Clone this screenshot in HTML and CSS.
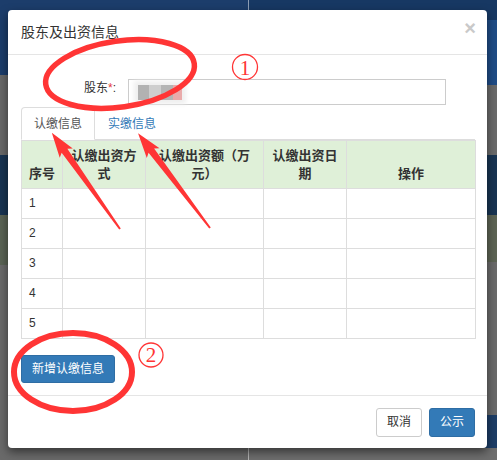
FILE: index.html
```html
<!DOCTYPE html>
<html lang="zh-CN">
<head>
<meta charset="utf-8">
<title>股东及出资信息</title>
<link rel="stylesheet" href="styles.css">
</head>
<body>
<div class="modal">
  <div class="modal-header">
    <h4 class="modal-title">股东及出资信息</h4>
    <span class="close">×</span>
  </div>
  <div class="modal-body">
    <div class="form-row">
      <label class="form-label">股东<span class="req">*</span>:</label>
      <div class="input"><span class="mosaic"><i class="m1"></i><i class="m2"></i><i class="m3"></i><i class="m4"></i></span></div>
    </div>
    <ul class="tabs">
      <li class="tab active">认缴信息</li>
      <li class="tab">实缴信息</li>
    </ul>
    <table class="grid">
      <colgroup>
        <col class="c1"><col class="c2"><col class="c3"><col class="c4"><col class="c5">
      </colgroup>
      <thead>
        <tr><th>序号</th><th>认缴出资方式</th><th>认缴出资额（万元）</th><th>认缴出资日期</th><th>操作</th></tr>
      </thead>
      <tbody>
        <tr><td>1</td><td></td><td></td><td></td><td></td></tr>
        <tr><td>2</td><td></td><td></td><td></td><td></td></tr>
        <tr><td>3</td><td></td><td></td><td></td><td></td></tr>
        <tr><td>4</td><td></td><td></td><td></td><td></td></tr>
        <tr><td>5</td><td></td><td></td><td></td><td></td></tr>
      </tbody>
    </table>
    <button class="btn btn-primary add">新增认缴信息</button>
  </div>
  <div class="modal-footer">
    <button class="btn btn-default">取消</button>
    <button class="btn btn-primary">公示</button>
  </div>
</div>
<svg class="annot" width="497" height="460" viewBox="0 0 497 460">
  <g fill="none" stroke="#ff3535">
    <ellipse cx="120" cy="74" rx="75" ry="33" stroke-width="5.5" transform="rotate(-8 120 74)"/>
    <ellipse cx="73" cy="372" rx="59" ry="39" stroke-width="6"/>
    <circle cx="245" cy="67" r="12.5" stroke-width="1.3"/>
    <circle cx="151" cy="355" r="12" stroke-width="1.3"/>
  </g>
  <g fill="#ff3535" font-family="Liberation Serif, serif" font-size="21" text-anchor="middle">
    <text x="245" y="74.5">1</text>
    <text x="151" y="362">2</text>
  </g>
  <g fill="#ff3535">
    <polygon points="0,-1 96,-3.5 93,-8 118,0 93,8 96,3.5 0,1" transform="translate(120,229) rotate(-125.3)"/>
    <polygon points="0,-1 97,-3.5 94,-8 119,0 94,8 97,3.5 0,1" transform="translate(210,228) rotate(-127.2)"/>
  </g>
</svg>
</body>
</html>
```
FILE: styles.css
```css
html, body {
  margin: 0;
  padding: 0;
}
body {
  width: 497px;
  height: 460px;
  overflow: hidden;
  position: relative;
  font-family: "Liberation Sans", "Noto Sans CJK SC", sans-serif;
  font-size: 12px;
  color: #333;
  background:
    linear-gradient(to bottom, #1c3d6b 0 75px, #686868 75px 155px, #183452 155px 215px, #5a6354 215px 265px, #6a6a6a 265px) left top / 50% 100% no-repeat,
    linear-gradient(to bottom, #173863 0 20px, #1f4c86 20px 85px, #6a6a6a 85px 155px, #183452 155px 215px, #5d6454 215px 262px, #6a6a6a 262px 415px, #1d3d66 415px 448px, #6e6e6e 448px) right top / 50% 100% no-repeat;
}
.modal {
  width: 479px;
  height: 438px;
  margin: 10px 0 0 8px;
  background: #fff;
  border-radius: 4px;
  box-shadow: 0 4px 10px rgba(0, 0, 0, 0.5);
  display: flex;
  flex-direction: column;
}
.modal-header {
  height: 45px;
  box-sizing: border-box;
  border-bottom: 1px solid #e5e5e5;
  padding: 0 13px;
  display: flex;
  align-items: center;
  justify-content: space-between;
}
.modal-title {
  margin: 0;
  font-size: 14px;
  font-weight: normal;
  line-height: 20px;
  color: #333;
}
.close {
  align-self: flex-start;
  margin-top: 8px;
  margin-right: -2px;
  font-size: 20px;
  line-height: 20px;
  font-weight: bold;
  color: #c9c9c9;
}
.modal-body {
  flex: 1;
  padding: 24px 12px 0 13px;
}
.form-row {
  display: flex;
  height: 26px;
}
.form-label {
  width: 95px;
  margin-right: 12px;
  margin-top: 1px;
  text-align: right;
  line-height: 17px;
  color: #333;
}
.req {
  color: #e4393c;
}
.input {
  width: 318px;
  height: 26px;
  box-sizing: border-box;
  border: 1px solid #ccc;
  padding: 5px 0 0 9px;
}
.mosaic {
  display: flex;
  height: 15px;
  width: 44px;
  box-shadow: 0 0 5px 4px #efefef;
  filter: blur(0.6px);
}
.mosaic i {
  display: block;
  height: 15px;
}
.m1 { width: 11px; background: #b2b2b2; }
.m2 { width: 12px; background: #cecece; }
.m3 { width: 12px; background: #b4b4b4; }
.m4 { width: 9px; background: #e9aaaa; }
.tabs {
  list-style: none;
  margin: 2px 0 0;
  padding: 0;
  display: flex;
  border-bottom: 1px solid #ddd;
  height: 32px;
}
.tab {
  padding: 8px 12px 6px;
  line-height: 17px;
  border: 1px solid transparent;
  border-radius: 4px 4px 0 0;
  color: #337ab7;
  height: 17px;
}
.tab.active {
  color: #555;
  border-color: #ddd #ddd #fff;
  background: #fff;
}
.grid {
  width: 454px;
  border-collapse: collapse;
  table-layout: fixed;
  border: 1px solid #ddd;
}
.c1 { width: 41px; }
.c2 { width: 83px; }
.c3 { width: 118px; }
.c4 { width: 83px; }
.c5 { width: 129px; }
.grid th {
  background: #dff0d8;
  font-size: 13px;
  font-weight: bold;
  line-height: 18px;
  padding: 6px 6px 5px;
  vertical-align: bottom;
  text-align: center;
  border: 1px solid #ddd;
  color: #333;
}
.grid td {
  padding: 6px 7px;
  line-height: 17px;
  height: 17px;
  border: 1px solid #ddd;
  color: #333;
}
.btn {
  font-family: inherit;
  font-size: 12px;
  line-height: 17px;
  padding: 5px 10px;
  border: 1px solid transparent;
  border-radius: 3px;
  margin: 0;
}
.btn-default {
  background: #fff;
  border-color: #ccc;
  color: #333;
}
.btn-primary {
  background: #337ab7;
  border-color: #2e6da4;
  color: #fff;
}
.add {
  display: block;
  margin-top: 16px;
  line-height: 16px;
}
.modal-footer {
  border-top: 1px solid #e5e5e5;
  padding: 12px 12px 11px;
  display: flex;
  justify-content: flex-end;
  gap: 7px;
}
.annot {
  position: absolute;
  left: 0;
  top: 0;
  pointer-events: none;
}
```
